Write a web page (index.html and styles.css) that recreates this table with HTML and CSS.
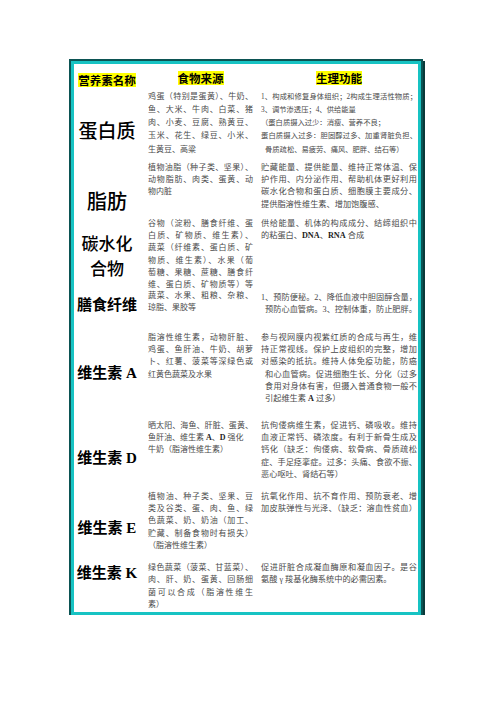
FILE: index.html
```html
<!DOCTYPE html>
<html lang="zh">
<head>
<meta charset="utf-8">
<title>营养素</title>
<link rel="stylesheet" href="styles.css">
</head>
<body>
<div class="sheet">
  <div class="row head">
    <div class="c1"><span class="hl">营养素名称</span></div>
    <div class="c2"><span class="hl">食物来源</span></div>
    <div class="c3"><span class="hl">生理功能</span></div>
  </div>

  <div class="row r1">
    <div class="c1"><div class="big">蛋白质</div></div>
    <div class="c2">
      <div class="j">鸡蛋（特别是蛋黄）、牛奶、</div>
      <div class="j">鱼、大米、牛肉、白菜、猪</div>
      <div class="j">肉、小麦、豆腐、熟黄豆、</div>
      <div class="j">玉米、花生、绿豆、小米、</div>
      <div>生黄豆、高粱</div>
    </div>
    <div class="c3 small">
      <div class="j">1、构成和修复身体组织；2构成生理活性物质；</div>
      <div>3、调节渗透压；4、供给能量</div>
      <div>（蛋白质摄入过少：消瘦、营养不良；</div>
      <div class="j">蛋白质摄入过多：胆固醇过多、加重肾脏负担、</div>
      <div class="ind">骨质疏松、易疲劳、痛风、肥胖、结石等）</div>
    </div>
  </div>

  <div class="row r2">
    <div class="c1"><div class="big b2">脂肪</div></div>
    <div class="c2">
      <div class="j">植物油脂（种子类、坚果）、</div>
      <div class="j">动物脂肪、肉类、蛋黄、动</div>
      <div>物内脏</div>
    </div>
    <div class="c3">
      <div class="j">贮藏能量、提供能量、维持正常体温、保</div>
      <div class="j">护作用、内分泌作用、帮助机体更好利用</div>
      <div class="j">碳水化合物和蛋白质、细胞膜主要成分、</div>
      <div>提供脂溶性维生素、增加饱腹感、</div>
    </div>
  </div>

  <div class="row r3">
    <div class="c1"><div class="big b3">碳水化<br>合物</div></div>
    <div class="c2">
      <div class="j">谷物（淀粉、膳食纤维、蛋</div>
      <div class="j">白质、矿物质、维生素）、</div>
      <div class="j">蔬菜（纤维素、蛋白质、矿</div>
      <div class="j">物质、维生素）、水果（葡</div>
      <div class="j">萄糖、果糖、蔗糖、膳食纤</div>
      <div class="j">维、蛋白质、矿物质等）等</div>
    </div>
    <div class="c3">
      <div class="j">供给能量、机体的构成成分、结缔组织中</div>
      <div>的粘蛋白、<b>DNA</b>、<b>RNA</b> 合成</div>
    </div>
  </div>

  <div class="row r4">
    <div class="c1"><div class="vit">膳食纤维</div></div>
    <div class="c2">
      <div class="j">蔬菜、水果、粗粮、杂粮、</div>
      <div>琼脂、果胶等</div>
    </div>
    <div class="c3">
      <div class="j">1、预防便秘。2、降低血液中胆固醇含量，</div>
      <div class="j ind">预防心血管病。3、控制体重，防止肥胖。</div>
    </div>
  </div>

  <div class="row r5">
    <div class="c1"><div class="vit">维生素 A</div></div>
    <div class="c2">
      <div class="j">脂溶性维生素，动物肝脏、</div>
      <div class="j">鸡蛋、鱼肝油、牛奶、胡萝</div>
      <div class="j">卜、红薯、菠菜等深绿色或</div>
      <div>红黄色蔬菜及水果</div>
    </div>
    <div class="c3">
      <div class="j">参与视网膜内视紫红质的合成与再生，维</div>
      <div class="j">持正常视线。保护上皮组织的完整，增加</div>
      <div class="j">对感染的抵抗。维持人体免疫功能，防癌</div>
      <div class="j ind">和心血管病。促进细胞生长、分化（过多</div>
      <div class="j ind">食用对身体有害，但摄入普通食物一般不</div>
      <div class="ind">引起维生素 <b>A</b> 过多）</div>
    </div>
  </div>

  <div class="row r6">
    <div class="c1"><div class="vit">维生素 D</div></div>
    <div class="c2">
      <div class="j">晒太阳、海鱼、肝脏、蛋黄、</div>
      <div>鱼肝油、维生素 <b>A</b>、<b>D</b> 强化</div>
      <div>牛奶（脂溶性维生素）</div>
    </div>
    <div class="c3">
      <div class="j">抗佝偻病维生素，促进钙、磷吸收。维持</div>
      <div class="j">血液正常钙、磷浓度。有利于新骨生成及</div>
      <div class="j">钙化（缺乏：佝偻病、软骨病、骨质疏松</div>
      <div class="j">症、手足痉挛症。过多：头痛、食欲不振、</div>
      <div>恶心呕吐、肾结石等）</div>
    </div>
  </div>

  <div class="row r7">
    <div class="c1"><div class="vit">维生素 E</div></div>
    <div class="c2">
      <div class="j">植物油、种子类、坚果、豆</div>
      <div class="j">类及谷类、蛋、肉、鱼、绿</div>
      <div class="j">色蔬菜、奶、奶油（加工、</div>
      <div class="j">贮藏、制备食物时有损失）</div>
      <div>（脂溶性维生素）</div>
    </div>
    <div class="c3">
      <div class="j">抗氧化作用、抗不育作用、预防衰老、增</div>
      <div class="j">加皮肤弹性与光泽、（缺乏：溶血性贫血）</div>
    </div>
  </div>

  <div class="row r8">
    <div class="c1"><div class="vit">维生素 K</div></div>
    <div class="c2">
      <div class="j">绿色蔬菜（菠菜、甘蓝菜）、</div>
      <div class="j">肉、肝、奶、蛋黄、回肠细</div>
      <div class="j">菌可以合成（脂溶性维生</div>
      <div>素）</div>
    </div>
    <div class="c3">
      <div class="j">促进肝脏合成凝血酶原和凝血因子。是谷</div>
      <div>氨酸 γ 羧基化酶系统中的必需因素。</div>
    </div>
  </div>
</div>
</body>
</html>
```

FILE: styles.css
```css
html, body {
  margin: 0;
  padding: 0;
  background: #ffffff;
}

body {
  font-family: "Liberation Serif", "Noto Sans CJK SC", serif;
  color: #4a4a4a;
}

.sheet {
  box-sizing: border-box;
  width: 350px;
  margin: 61px 0 0 71px;
  padding-right: 1px;
  border: 3px solid #17c3c3;
  box-shadow: 0 0 0 2px #0c5454, 2px 2px 0 2px #0a3a3a;
  background: #ffffff;
}

.row {
  display: grid;
  grid-template-columns: 66px 105px 156px;
  column-gap: 8px;
  box-sizing: border-box;
}

.c1 {
  text-align: center;
  color: #000000;
}

.c2 {
  font-size: 8px;
  line-height: 12.2px;
}

.c3 {
  font-size: 8.2px;
  line-height: 12.2px;
}

.c3.small {
  font-size: 7.3px;
}

.j {
  text-align: justify;
  text-align-last: justify;
}

.ind {
  padding-left: 4px;
}

b {
  font-weight: bold;
  color: #222222;
}

/* header */
.head {
  height: 24px;
  padding-top: 7px;
}

.head .c2,
.head .c3 {
  text-align: center;
}

.hl {
  background: #ffff00;
  color: #000000;
  font-family: "Noto Sans CJK SC", sans-serif;
  font-weight: bold;
  font-size: 11.5px;
  line-height: 14px;
  display: inline-block;
}

/* labels */
.big {
  font-family: "Noto Sans CJK SC", sans-serif;
  font-weight: 500;
  font-size: 19px;
  line-height: 22px;
}

.b2 {
  font-size: 20px;
  line-height: 24px;
}

.b3 {
  font-size: 17px;
  line-height: 25px;
}

.vit {
  font-family: "Liberation Serif", "Noto Sans CJK SC", serif;
  font-weight: bold;
  font-size: 15px;
  line-height: 18px;
}

/* rows */
.r1 { height: 72px; }
.r1 .c1 { padding-top: 31px; }
.r1 .c2, .r1 .c3 { padding-top: 1.5px; line-height: 13.25px; }

.r2 { height: 54px; }
.r2 .c1 { padding-top: 29px; }
.r2 .c2, .r2 .c3 { padding-top: 2px; }

.r3 { height: 76px; }
.r3 .c1 { padding-top: 16px; }
.r3 .c2, .r3 .c3 { padding-top: 4px; }

.r4 { height: 40px; }
.r4 .c1 { padding-top: 6px; }
.r4 .c2 { padding-top: 0; }
.r4 .c3 { padding-top: 2px; }

.r5 { height: 88px; }
.r5 .c1 { padding-top: 34px; }
.r5 .c2, .r5 .c3 { padding-top: 2px; }

.r6 { height: 72px; }
.r6 .c1 { padding-top: 31px; }
.r6 .c2, .r6 .c3 { padding-top: 2px; }

.r7 { height: 70px; }
.r7 .c1 { padding-top: 29px; }
.r7 .c2, .r7 .c3 { padding-top: 1px; }

.r8 { height: 52px; }
.r8 .c1 { padding-top: 4px; }
.r8 .c2, .r8 .c3 { padding-top: 1.5px; line-height: 12.6px; }
```
